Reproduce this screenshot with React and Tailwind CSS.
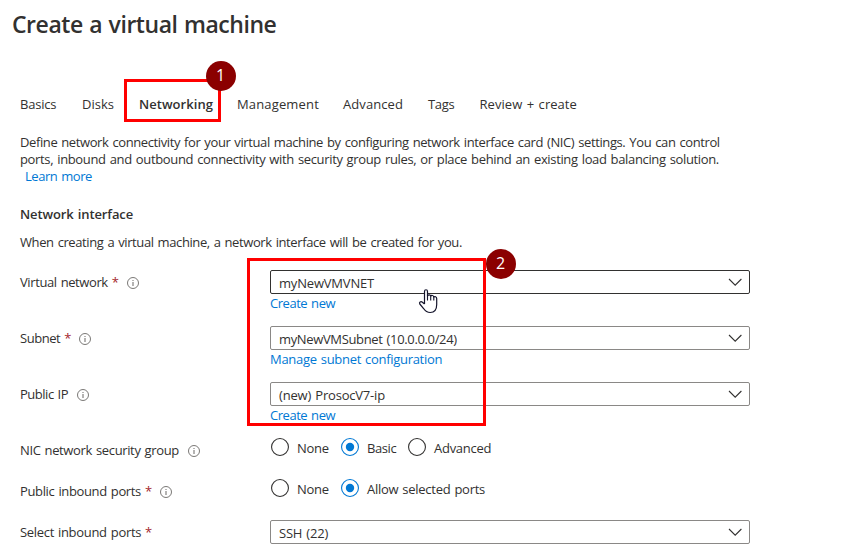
const TABS = [
  { label: 'Basics', cls: 'w-[62px] tracking-[-0.2px]' },
  { label: 'Disks', cls: 'w-[57px]' },
  { label: 'Networking', cls: 'w-[98px] font-semibold tracking-[0.05px]' },
  { label: 'Management', cls: 'w-[106px] tracking-[0.15px]' },
  { label: 'Advanced', cls: 'w-[85px] tracking-[0.08px]' },
  { label: 'Tags', cls: 'w-[51.5px] tracking-[-0.35px]' },
  { label: 'Review + create', cls: 'tracking-[0.05px]' },
];

function InfoIcon() {
  return (
    <svg width="12" height="12" viewBox="0 0 12 12" className="shrink-0">
      <circle cx="6" cy="6" r="5.5" fill="none" stroke="#6b6967" strokeWidth="0.9" />
      <rect x="5.5" y="5" width="1" height="4" fill="#6b6967" />
      <rect x="5.5" y="3" width="1" height="1" fill="#6b6967" />
    </svg>
  );
}

function Label({ text, cls = '', required, info }) {
  return (
    <div className="flex h-6 w-[250px] shrink-0 items-center">
      <span className={cls}>{text}</span>
      {required && <span className="ml-[4px] w-[6px] text-[13px] text-[#a4262c]">*</span>}
      {info && (
        <span className="ml-[9px] mt-px">
          <InfoIcon />
        </span>
      )}
    </div>
  );
}

function Select({ value, active, cls = '' }) {
  return (
    <div
      className={`flex h-6 w-[480px] items-center justify-between rounded-[2px] border pl-2 pr-[7px] ${
        active ? 'border-[#323130]' : 'border-[#8a8886]'
      }`}
    >
      <span className={`mt-[3px] ${cls}`}>{value}</span>
      <svg width="14" height="8" viewBox="0 0 14 8" className="shrink-0">
        <path d="M1 1 L7.2 7.2 L13.4 1" fill="none" stroke="#323130" strokeWidth="1.1" />
      </svg>
    </div>
  );
}

function Field({ label, select, link, linkCls = '' }) {
  return (
    <div className="flex h-14">
      {label}
      <div>
        {select}
        <a className={`mt-px block h-[17px] leading-[17px] text-[#0078d4] ${linkCls}`}>{link}</a>
      </div>
    </div>
  );
}

function Radio({ text, checked, cls = '' }) {
  return (
    <div className={`flex items-center ${cls}`}>
      <svg width="18" height="18" viewBox="0 0 18 18" className="mr-2 shrink-0">
        <circle cx="9" cy="9" r="8.45" fill="none" stroke={checked ? '#0078d4' : '#323130'} strokeWidth="1.1" />
        {checked && <circle cx="9" cy="9" r="4.2" fill="#0078d4" />}
      </svg>
      <span className="mt-[3px]">{text}</span>
    </div>
  );
}

function Badge({ n, cls }) {
  return (
    <div
      className={`absolute flex h-[30px] w-[30px] items-center justify-center rounded-full bg-[#8b0000] pb-px font-['Open_Sans',sans-serif] text-[16px] leading-none tracking-normal text-white ${cls}`}
    >
      {n}
    </div>
  );
}

function HandCursor() {
  return (
    <svg width="20" height="25" viewBox="0 0 20 25" className="absolute left-[418px] top-[289px]">
      <path
        d="M6.5 15 V2.4 C6.5 0.2 9.5 0.2 9.5 2.4 V7 C10 5.4 12.5 5.4 12.7 7.2 C13.4 5.9 15.6 6.3 15.8 8 C16.8 7.1 18.7 7.6 18.7 9.6 V15.5 C18.7 20.5 16.2 23.5 12.2 23.5 C9 23.5 7.4 22.3 5.8 19.8 L1.8 15 C0.8 13.4 2.8 11.8 4.4 13.2 L6.5 15"
        fill="#fff"
        stroke="#14142b"
        strokeWidth="1.2"
        strokeLinejoin="round"
      />
      <path d="M9.5 6.5 V11.5 M12.7 7.2 V11.5 M15.8 8 V11.5" stroke="#14142b" strokeWidth="1.1" />
    </svg>
  );
}

export default function App() {
  return (
    <div className="relative h-[557px] w-[865px] overflow-hidden bg-white pl-5 font-['Open_Sans','Noto_Sans',sans-serif] text-[13px] leading-[17px] tracking-[-0.36px] text-[#323130] [word-spacing:1px]">
      <h1 className="-ml-2 pt-[8px] text-[23px] font-semibold leading-8 tracking-[-0.46px]">Create a virtual machine</h1>

      <nav className="mt-[56px] flex h-[18px] tracking-normal">
        {TABS.map((t) => (
          <span key={t.label} className={`shrink-0 whitespace-nowrap ${t.cls}`}>
            {t.label}
          </span>
        ))}
      </nav>

      <div className="mt-[20px] whitespace-nowrap">
        <p className="tracking-[-0.395px]">
          Define network connectivity for your virtual machine by configuring network interface card (NIC) settings. You can control
        </p>
        <p className="tracking-[-0.35px]">
          ports, inbound and outbound connectivity with security group rules, or place behind an existing load balancing solution.
        </p>
        <a className="block pl-[5px] tracking-[-0.45px] text-[#0078d4]">Learn more</a>
      </div>

      <h2 className="mt-[21px] font-semibold tracking-[-0.12px]">Network interface</h2>
      <p className="mt-[11px] tracking-[-0.4px]">When creating a virtual machine, a network interface will be created for you.</p>

      <div className="mt-[19px]">
        <Field
          label={<Label text="Virtual network" cls="tracking-[-0.4px]" required info />}
          select={<Select value="myNewVMVNET" active cls="tracking-[-0.19px]" />}
          link="Create new"
          linkCls="tracking-[-0.46px]"
        />
        <Field
          label={<Label text="Subnet" cls="tracking-[-0.45px]" required info />}
          select={<Select value="myNewVMSubnet (10.0.0.0/24)" cls="tracking-[-0.35px]" />}
          link="Manage subnet configuration"
          linkCls="tracking-[-0.3px]"
        />
        <Field
          label={<Label text="Public IP" cls="tracking-[-0.48px]" info />}
          select={<Select value="(new) ProsocV7-ip" cls="tracking-[-0.19px]" />}
          link="Create new"
          linkCls="tracking-[-0.46px]"
        />
      </div>

      <div className="flex h-[41px]">
        <Label text="NIC network security group" info />
        <div className="ml-px flex h-[18px]">
          <Radio text="None" cls="w-[70px] tracking-[-0.25px]" />
          <Radio text="Basic" checked cls="w-[67px] tracking-[-0.4px]" />
          <Radio text="Advanced" cls="tracking-[-0.27px]" />
        </div>
      </div>
      <div className="flex h-[41px]">
        <Label text="Public inbound ports" required info />
        <div className="ml-px flex h-[18px]">
          <Radio text="None" cls="w-[70px] tracking-[-0.25px]" />
          <Radio text="Allow selected ports" checked cls="tracking-[-0.28px]" />
        </div>
      </div>
      <div className="flex">
        <Label text="Select inbound ports" cls="tracking-[-0.32px]" required />
        <Select value="SSH (22)" cls="tracking-[-0.22px]" />
      </div>

      <div className="absolute left-[124px] top-[79px] h-[43px] w-[97px] border-[3px] border-[#ff0000]" />
      <div className="absolute left-[247px] top-[258px] h-[168px] w-[239px] border-[3px] border-[#ff0000]" />
      <Badge n="1" cls="left-[205.5px] top-[60.5px]" />
      <Badge n="2" cls="left-[485.5px] top-[248.5px]" />
      <HandCursor />
    </div>
  );
}
